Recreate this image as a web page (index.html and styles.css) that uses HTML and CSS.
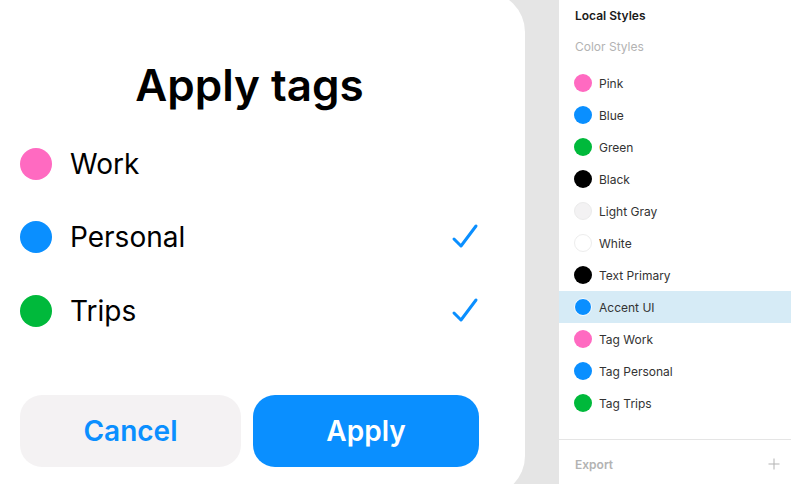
FILE: index.html
```html
<!DOCTYPE html>
<html lang="en">

<head>
    <meta charset="UTF-8" />
    <meta name="viewport" content="width=device-width, initial-scale=1.0" />
    <title>Apply tags</title>
    <link rel="stylesheet" href="styles.css">
</head>

<body>
    <div class="canvas">
        <div class="sheet">
            <h1 class="sheet-title">Apply tags</h1>

            <div class="tags">
                <div class="tag">
                    <span class="tag-dot pink"></span>
                    <span class="tag-name">Work</span>
                </div>
                <div class="tag">
                    <span class="tag-dot blue"></span>
                    <span class="tag-name">Personal</span>
                    <svg class="check" width="28" height="28" viewBox="0 0 28 28">
                        <path d="M3 16 L10 23 L25 3" fill="none" stroke="#0a8fff" stroke-width="3" stroke-linecap="round" stroke-linejoin="round" />
                    </svg>
                </div>
                <div class="tag">
                    <span class="tag-dot green"></span>
                    <span class="tag-name">Trips</span>
                    <svg class="check" width="28" height="28" viewBox="0 0 28 28">
                        <path d="M3 16 L10 23 L25 3" fill="none" stroke="#0a8fff" stroke-width="3" stroke-linecap="round" stroke-linejoin="round" />
                    </svg>
                </div>
            </div>

            <div class="actions">
                <button class="btn btn-cancel">Cancel</button>
                <button class="btn btn-apply">Apply</button>
            </div>
        </div>
    </div>

    <aside class="panel">
        <div class="panel-title">Local Styles</div>
        <div class="panel-sub">Color Styles</div>

        <ul class="styles">
            <li class="style"><span class="swatch pink"></span>Pink</li>
            <li class="style"><span class="swatch blue"></span>Blue</li>
            <li class="style"><span class="swatch green"></span>Green</li>
            <li class="style"><span class="swatch black"></span>Black</li>
            <li class="style"><span class="swatch light"></span>Light Gray</li>
            <li class="style"><span class="swatch white"></span>White</li>
            <li class="style"><span class="swatch black"></span>Text Primary</li>
            <li class="style selected"><span class="swatch blue"></span>Accent UI</li>
            <li class="style"><span class="swatch pink"></span>Tag Work</li>
            <li class="style"><span class="swatch blue"></span>Tag Personal</li>
            <li class="style"><span class="swatch green"></span>Tag Trips</li>
        </ul>

        <div class="export">
            <span>Export</span>
            <svg width="12" height="12" viewBox="0 0 12 12">
                <path d="M6 0.5 V11.5 M0.5 6 H11.5" stroke="#b3b3b3" stroke-width="1" />
            </svg>
        </div>
    </aside>
</body>

</html>
```

FILE: styles.css
```css
* {
    box-sizing: border-box;
}

body {
    margin: 0;
    height: 484px;
    display: flex;
    overflow: hidden;
    background-color: #e5e5e5;
    font-family: Inter, "Noto Sans", sans-serif;
}

.canvas {
    width: 559px;
    flex-shrink: 0;
}

.sheet {
    width: 525px;
    height: 504px;
    margin-top: -8px;
    background: white;
    border-radius: 0 40px 40px 0;
    padding: 0 46px 0 20px;
    display: flex;
    flex-direction: column;
}

.sheet-title {
    margin: 63px 0 0;
    text-align: center;
    font-size: 44px;
    font-weight: 600;
    color: black;
    line-height: 60px;
}

.tags {
    margin-top: 12px;
    display: flex;
    flex-direction: column;
}

.tag {
    height: 73.5px;
    display: flex;
    align-items: center;
}

.tag-dot {
    width: 32px;
    height: 32px;
    border-radius: 50%;
    margin-right: 18px;
}

.tag-name {
    flex: 1;
    font-size: 28px;
    color: black;
}

.pink {
    background-color: #ff6ac1;
}

.blue {
    background-color: #0a8fff;
}

.green {
    background-color: #00b93b;
}

.black {
    background-color: black;
}

.light {
    background-color: #f3f2f3;
    border: 1px solid #ebebeb;
}

.white {
    background-color: white;
    border: 1px solid #ededed;
}

.actions {
    margin-top: 47px;
    display: flex;
    gap: 12px;
}

.btn {
    height: 72px;
    border: none;
    border-radius: 22px;
    font-family: inherit;
    font-size: 28px;
    font-weight: 600;
}

.btn-cancel {
    width: 221px;
    background-color: #f4f2f3;
    color: #0a8fff;
}

.btn-apply {
    flex: 1;
    background-color: #0a8fff;
    color: white;
}

.panel {
    flex: 1;
    background: white;
    display: flex;
    flex-direction: column;
    font-size: 12px;
    color: #333;
}

.panel > * {
    flex-shrink: 0;
}

.panel-title {
    padding: 8px 16px 0;
    height: 31px;
    font-weight: 600;
    color: #1a1a1a;
}

.panel-sub {
    padding: 8px 16px 0;
    height: 36px;
    color: #b3b3b3;
}

.styles {
    list-style: none;
    margin: 0;
    padding: 0;
}

.style {
    height: 32px;
    display: flex;
    align-items: center;
    padding-left: 15px;
}

.style.selected {
    background-color: #d6ebf6;
}

.style.selected .swatch {
    border: 1px solid white;
}

.swatch {
    width: 18px;
    height: 18px;
    border-radius: 50%;
    margin-right: 7px;
}

.export {
    margin-top: 20px;
    border-top: 1px solid #e5e5e5;
    height: 45px;
    padding: 4px 11px 0 16px;
    display: flex;
    align-items: center;
    justify-content: space-between;
    font-weight: 600;
    color: #b3b3b3;
}
```
